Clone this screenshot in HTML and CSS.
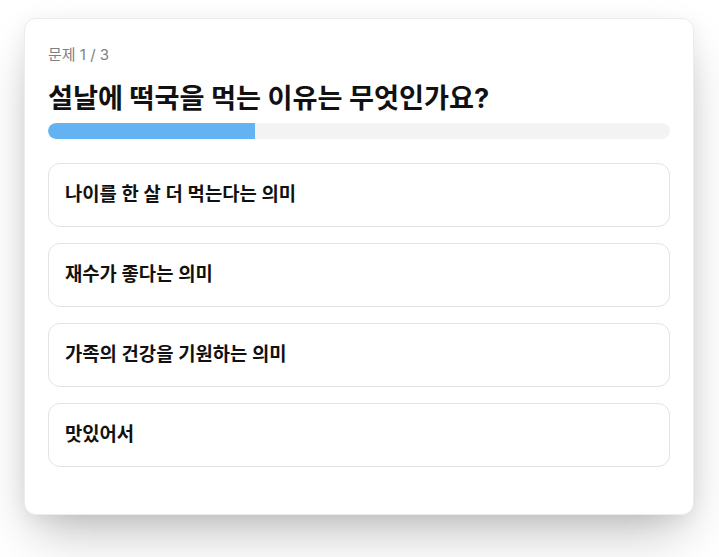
FILE: index.html
```html
<!DOCTYPE html>
<html lang="ko">
<head>
<meta charset="utf-8">
<title>퀴즈</title>
<link rel="stylesheet" href="styles.css">
</head>
<body>
<main class="card">
  <div class="counter">문제 1 / 3</div>
  <h1 class="question">설날에 떡국을 먹는 이유는 무엇인가요?</h1>
  <div class="progress"><div class="progress-fill" style="width: 33.333%"></div></div>
  <ul class="options">
    <li class="option">나이를 한 살 더 먹는다는 의미</li>
    <li class="option">재수가 좋다는 의미</li>
    <li class="option">가족의 건강을 기원하는 의미</li>
    <li class="option">맛있어서</li>
  </ul>
</main>
</body>
</html>
```
FILE: styles.css
```css
html, body {
  margin: 0;
  padding: 0;
  background: #ffffff;
}
body {
  box-sizing: border-box;
  min-height: 557px;
  padding: 18px 25px 42px 24px;
  font-family: "Inter", "Noto Sans CJK KR", sans-serif;
  color: #111111;
}
.card {
  box-sizing: border-box;
  width: 670px;
  height: 497px;
  background: #ffffff;
  border: 1px solid #ececec;
  border-radius: 12px;
  padding: 25px 23px 24px 23px;
  box-shadow: 0 25px 50px -12px rgba(0, 0, 0, 0.28), 0 4px 20px rgba(0, 0, 0, 0.06);
}
.counter {
  font-size: 15px;
  line-height: 22px;
  color: #7d7f84;
}
.question {
  margin: 15px 0 0 0;
  font-size: 27.2px;
  line-height: 36px;
  font-weight: 700;
  color: #111111;
}
.progress {
  margin-top: 6px;
  height: 16px;
  border-radius: 8px;
  background: #f3f3f3;
  overflow: hidden;
}
.progress-fill {
  height: 100%;
  background: #63b3f3;
  border-radius: 8px 0 0 8px;
}
.options {
  list-style: none;
  margin: 24px 0 0 0;
  padding: 0;
  display: flex;
  flex-direction: column;
  gap: 16px;
}
.option {
  border: 1px solid #e3e3e3;
  border-radius: 12px;
  padding: 17px 16px;
  font-size: 18.8px;
  line-height: 28px;
  font-weight: 600;
  color: #111111;
}
```
